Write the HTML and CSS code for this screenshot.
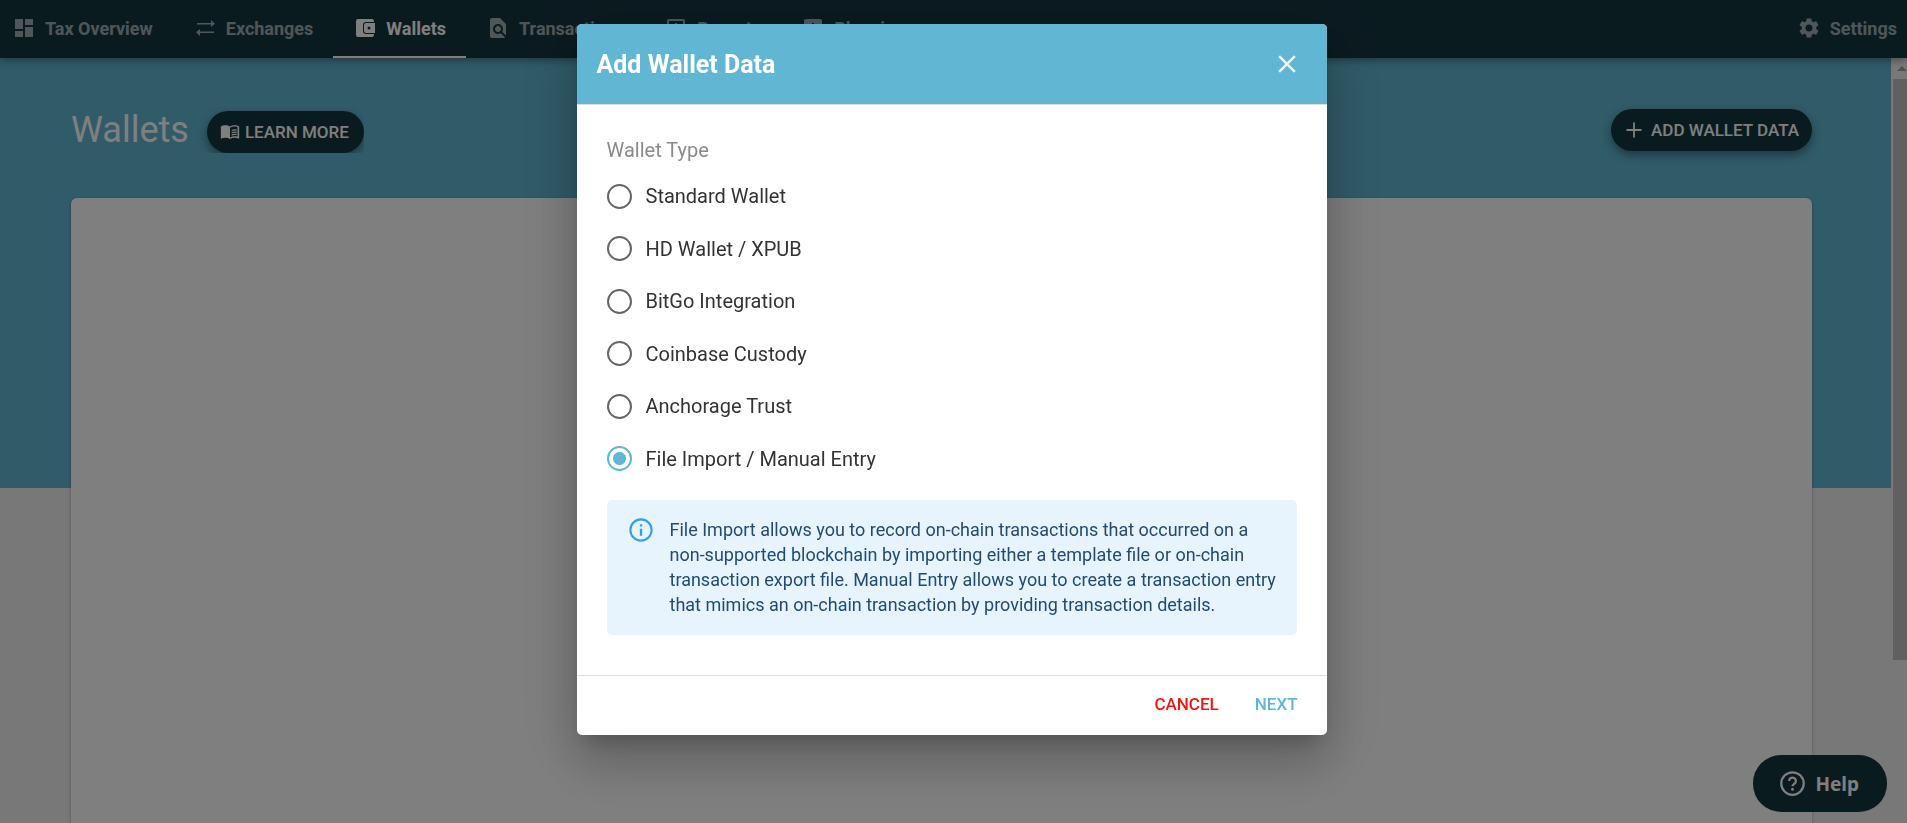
FILE: index.html
```html
<!DOCTYPE html>
<html lang="en">
<head>
    <meta charset="UTF-8">
    <meta name="viewport" content="width=device-width, initial-scale=1.0">
    <title>Wallets</title>
    <link rel="stylesheet" href="styles.css">
</head>
<body>
    <nav class="navbar">
        <a href="#" class="tab">
            <svg class="icon" viewBox="0 0 24 24"><path d="M3 13h8V3H3v10zm0 8h8v-6H3v6zm10 0h8V11h-8v10zm0-18v6h8V3h-8z"/></svg>
            Tax Overview
        </a>
        <a href="#" class="tab">
            <svg class="icon" viewBox="0 0 24 24"><path d="M4 7h14V4l4 3.700-4 3.300V8.500H4zM21 15.500v1.500H7v3l-4-3.700L7 13v2.500z"/></svg>
            Exchanges
        </a>
        <a href="#" class="tab active">
            <svg class="icon" viewBox="0 0 24 24"><path fill-rule="evenodd" d="M5 3h14a2 2 0 0 1 2 2v1h-8a3 3 0 0 0-3 3v6a3 3 0 0 0 3 3h8v1a2 2 0 0 1-2 2H5a2 2 0 0 1-2-2V5a2 2 0 0 1 2-2zm8 4h9v10h-9a2 2 0 0 1-2-2V9a2 2 0 0 1 2-2zm3 3.500a1.500 1.500 0 1 0 0 3 1.500 1.500 0 0 0 0-3z"/></svg>
            Wallets
        </a>
        <a href="#" class="tab">
            <svg class="icon" viewBox="0 0 24 24"><path d="M20 19.590V8l-6-6H6c-1.100 0-1.990.9-1.990 2L4 20c0 1.100.89 2 1.990 2H18c.45 0 .85-.15 1.190-.4l-4.430-4.430c-.8.520-1.740.83-2.760.83-2.760 0-5-2.240-5-5s2.240-5 5-5 5 2.240 5 5c0 1.020-.31 1.960-.83 2.750L20 19.590zM9 13c0 1.660 1.340 3 3 3s3-1.340 3-3-1.340-3-3-3-3 1.340-3 3z"/></svg>
            Transactions
        </a>
        <a href="#" class="tab">
            <svg class="icon" viewBox="0 0 24 24"><path d="M19 3H5a2 2 0 0 0-2 2v14a2 2 0 0 0 2 2h14a2 2 0 0 0 2-2V5a2 2 0 0 0-2-2zm0 16H5V5h14v14zM7 10h2v7H7zm4-3h2v10h-2zm4 6h2v4h-2z"/></svg>
            Reports
        </a>
        <a href="#" class="tab">
            <svg class="icon" viewBox="0 0 24 24"><path d="M19 3H5a2 2 0 0 0-2 2v14a2 2 0 0 0 2 2h14a2 2 0 0 0 2-2V5a2 2 0 0 0-2-2zM9 17H7v-7h2v7zm4 0h-2V7h2v10zm4 0h-2v-4h2v4z"/></svg>
            Planning
        </a>
        <a href="#" class="tab settings">
            <svg class="icon" viewBox="0 0 24 24"><path d="M19.140 12.940c.04-.3.060-.61.060-.94s-.02-.64-.07-.94l2.030-1.580c.18-.14.23-.41.120-.61l-1.920-3.320c-.12-.22-.37-.29-.59-.22l-2.390.96c-.5-.38-1.030-.7-1.620-.94l-.36-2.540c-.04-.24-.24-.41-.48-.41h-3.840c-.24 0-.43.17-.47.410l-.36 2.540c-.59.24-1.130.57-1.620.94l-2.390-.96c-.22-.08-.47 0-.59.220L2.740 8.870c-.12.210-.08.470.120.610l2.030 1.580c-.05.3-.09.630-.09.940s.02.640.070.940l-2.030 1.580c-.18.140-.23.410-.12.610l1.920 3.320c.12.220.370.290.590.220l2.390-.96c.5.380 1.030.7 1.620.940l.36 2.540c.05.240.240.410.480.410h3.840c.24 0 .44-.17.470-.41l.36-2.540c.59-.24 1.130-.56 1.620-.94l2.390.96c.22.080.470 0 .59-.22l1.920-3.320c.12-.22.070-.47-.12-.61l-2.010-1.580zM12 15.600c-1.980 0-3.600-1.620-3.600-3.600s1.620-3.600 3.600-3.600 3.600 1.620 3.600 3.600-1.620 3.600-3.600 3.600z"/></svg>
            Settings
        </a>
    </nav>

    <div class="viewport">
        <main class="page">
            <header class="page-header">
                <h1>Wallets</h1>
                <div class="learn-wrap">
                    <button type="button" class="pill">
                        <svg class="book" viewBox="0 0 24 24"><path d="M12 5.500C10.500 4.500 8.600 4 6.500 4 4.500 4 2.500 4.400 1 5.500v14.700c1.500-.8 3.500-1.200 5.500-1.200s4 .5 5.500 1.500c1.500-1 3.500-1.500 5.500-1.500s4 .4 5.500 1.200V5.500C21.500 4.400 19.500 4 17.500 4s-4 .5-5.500 1.500zM21 17.500c-1-.3-2.300-.5-3.500-.5-1.700 0-4 .6-5.500 1.500V7c1.500-.9 3.800-1.500 5.500-1.500 1.200 0 2.400.1 3.500.5z"/><path d="M14 9.500c2-.9 4-1 6-.6v1.500c-2-.4-4-.2-6 .7zm0 2.700c2-.9 4-1 6-.6v1.500c-2-.4-4-.2-6 .7zm0 2.600c2-.9 4-1 6-.6v1.500c-2-.4-4-.2-6 .7z"/></svg>
                        LEARN MORE
                    </button>
                </div>
                <button type="button" class="pill add">
                    <svg class="icon" viewBox="0 0 24 24"><path d="M19.500 12.900h-6.600v6.600h-1.800v-6.600H4.500v-1.800h6.600V4.500h1.800v6.600h6.600z"/></svg>
                    ADD WALLET DATA
                </button>
            </header>
            <section class="card"></section>
        </main>
        <div class="scrollbar">
            <div class="scroll-arrow"></div>
            <div class="scroll-thumb"></div>
        </div>
    </div>

    <button type="button" class="help">
        <svg viewBox="0 0 20 20"><circle cx="10" cy="10" r="9" fill="none" stroke="currentColor" stroke-width="1.800"/><path d="M7.300 8a2.700 2.700 0 1 1 4.200 2.200c-.9.600-1.500 1-1.500 2" fill="none" stroke="currentColor" stroke-width="1.800"/><circle cx="10" cy="14.500" r="1.200" fill="currentColor"/></svg>
        Help
    </button>

    <div class="backdrop">
        <form class="modal" role="dialog" aria-labelledby="modal-title">
            <header class="modal-header">
                <h2 id="modal-title">Add Wallet Data</h2>
                <button type="button" class="close" aria-label="Close">
                    <svg viewBox="0 0 24 24"><path d="M19 6.410L17.590 5 12 10.590 6.410 5 5 6.410 10.590 12 5 17.590 6.410 19 12 13.410 17.590 19 19 17.590 13.410 12z"/></svg>
                </button>
            </header>

            <div class="modal-body">
                <fieldset class="wallet-types">
                    <legend>Wallet Type</legend>
                    <div class="options">
                        <label><input type="radio" name="type">Standard Wallet</label>
                        <label><input type="radio" name="type">HD Wallet / XPUB</label>
                        <label><input type="radio" name="type">BitGo Integration</label>
                        <label><input type="radio" name="type">Coinbase Custody</label>
                        <label><input type="radio" name="type">Anchorage Trust</label>
                        <label><input type="radio" name="type" checked>File Import / Manual Entry</label>
                    </div>
                </fieldset>

                <div class="alert">
                    <svg viewBox="0 0 24 24"><path d="M11 7h2v2h-2zm0 4h2v6h-2zm1-9a10 10 0 1 0 0 20 10 10 0 0 0 0-20zm0 18.200a8.200 8.200 0 1 1 0-16.400 8.200 8.200 0 0 1 0 16.400z"/></svg>
                    <p>File Import allows you to record on-chain transactions that occurred on a non-supported blockchain by importing either a template file or on-chain transaction export file. Manual Entry allows you to create a transaction entry that mimics an on-chain transaction by providing transaction details.</p>
                </div>
            </div>

            <footer class="modal-footer">
                <button type="button" class="text-btn cancel">CANCEL</button>
                <button type="submit" class="text-btn next">NEXT</button>
            </footer>
        </form>
    </div>
</body>
</html>
```
FILE: styles.css
```css
* {
    box-sizing: border-box;
}

body {
    margin: 0;
    height: 100vh;
    display: flex;
    flex-direction: column;
    overflow: hidden;
    font-family: Roboto, sans-serif;
    background-color: #f0f0f0;
}

button {
    border: none;
    padding: 0;
    background: none;
    font-family: inherit;
    cursor: pointer;
}

svg {
    flex-shrink: 0;
    fill: currentColor;
}

.icon {
    width: 24px;
    height: 24px;
}

/* top navigation */
.navbar {
    position: relative;
    z-index: 1;
    flex: 0 0 58px;
    display: flex;
    gap: 40px;
    padding: 0 10px 0 12px;
    background-color: #153641;
    box-shadow: 0 2px 8px rgba(0, 0, 0, 0.4);
}

.tab {
    position: relative;
    display: flex;
    align-items: center;
    gap: 9px;
    padding-bottom: 2px;
    color: rgba(255, 255, 255, 0.6);
    font-size: 18px;
    font-weight: 700;
    text-decoration: none;
    white-space: nowrap;
}

.tab.active {
    color: #fff;
}

.tab.active::after {
    content: "";
    position: absolute;
    left: -20px;
    right: -20px;
    bottom: 0;
    height: 2px;
    background-color: #fff;
}

.tab.settings {
    margin-left: auto;
}

/* page */
.viewport {
    flex: 1;
    display: flex;
    min-height: 0;
}

.page {
    flex: 1;
    display: flex;
    flex-direction: column;
    padding: 0 79px 0 71px;
    background: linear-gradient(#61b6d2 430px, #f0f0f0 430px);
}

.page-header {
    flex: 0 0 140px;
    display: flex;
    align-items: center;
    padding-top: 4px;
}

h1 {
    margin: 0 6px 0 0;
    color: #fff;
    font-size: 36px;
    font-weight: 400;
}

.learn-wrap {
    padding: 4px 0 0 12px;
    overflow: hidden;
}

.pill {
    display: flex;
    align-items: center;
    gap: 5px;
    height: 42px;
    padding: 0 15px 0 13px;
    border-radius: 21px;
    background-color: #153641;
    color: #fff;
    font-size: 17px;
    font-weight: 500;
    box-shadow: 0 4px 10px rgba(0, 0, 0, 0.4);
}

.pill .book {
    width: 20px;
    height: 20px;
}

.pill.add {
    margin-left: auto;
    padding: 0 13px 0 11px;
}

.card {
    flex: 1;
    border-radius: 6px 6px 0 0;
    background-color: #fff;
    box-shadow: 0 1px 3px rgba(0, 0, 0, 0.3);
}

.scrollbar {
    flex: 0 0 16px;
    padding-left: 2px;
    background-color: #f1f1f1;
}

.scroll-arrow {
    height: 21px;
    display: flex;
    justify-content: center;
    align-items: center;
    padding-left: 3px;
}

.scroll-arrow::before {
    content: "";
    border: 5px solid transparent;
    border-top-width: 0;
    border-bottom-color: #a3a3a3;
}

.scroll-thumb {
    height: 76%;
    background-color: #c1c1c1;
}

.help {
    position: fixed;
    right: 20px;
    bottom: 11px;
    display: flex;
    align-items: center;
    gap: 10px;
    height: 57px;
    padding: 0 28px 0 27px;
    border-radius: 28px;
    background-color: #153641;
    color: #fff;
    font-family: "Noto Sans", sans-serif;
    font-size: 19px;
    font-weight: 700;
}

.help svg {
    width: 25px;
    height: 25px;
}

/* dialog */
.backdrop {
    position: fixed;
    inset: 0;
    z-index: 2;
    padding: 24px 24px 24px 20px;
    background-color: rgba(0, 0, 0, 0.5);
}

.modal {
    width: 100%;
    max-width: 750px;
    margin: 0 auto;
    border-radius: 5px;
    overflow: hidden;
    background-color: #fff;
    box-shadow: 0 14px 19px -9px rgba(0, 0, 0, 0.2), 0 30px 48px 4px rgba(0, 0, 0, 0.14), 0 11px 58px 10px rgba(0, 0, 0, 0.12);
}

.modal-header {
    display: flex;
    justify-content: space-between;
    align-items: center;
    height: 81px;
    padding: 0 25px 0 20px;
    border-bottom: 1px solid #dcdfe6;
    background-color: #61b6d3;
    color: #fff;
}

h2 {
    margin: 0;
    font-size: 25px;
    font-weight: 700;
}

.close {
    display: flex;
    color: #f0f0f0;
}

.close svg {
    width: 30px;
    height: 30px;
}

.modal-body {
    padding: 33px 30px 40px;
}

.wallet-types {
    margin: 0;
    padding: 0;
    border: none;
}

legend {
    padding: 0;
    color: #8a8a8a;
    font-size: 20px;
    line-height: 24px;
}

.options {
    display: grid;
    height: 315px;
    margin: 8px 0 15px;
}

.options label {
    display: flex;
    align-items: center;
    gap: 14px;
    color: #333;
    font-size: 20px;
}

input[type="radio"] {
    appearance: none;
    width: 25px;
    height: 25px;
    margin: 0;
    border: 2px solid #666;
    border-radius: 50%;
}

input[type="radio"]:checked {
    border-color: #61b6d3;
    background: radial-gradient(circle, #61b6d3 6px, transparent 7px);
}

.alert {
    display: flex;
    gap: 15px;
    padding: 16px 20px 18px;
    border-radius: 5px;
    background-color: #e7f3fd;
    color: #1f4c70;
}

.alert svg {
    width: 28px;
    height: 28px;
    color: #339ef4;
}

.alert p {
    margin: 0;
    padding-top: 1px;
    font-size: 18px;
    line-height: 25px;
}

.modal-footer {
    display: flex;
    justify-content: flex-end;
    align-items: center;
    gap: 36px;
    height: 60px;
    padding: 0 29px 3px;
    border-top: 1px solid #dedede;
}

.text-btn {
    font-size: 17px;
    font-weight: 500;
}

.cancel {
    color: #f11414;
}

.next {
    color: #61b6d3;
}
```
